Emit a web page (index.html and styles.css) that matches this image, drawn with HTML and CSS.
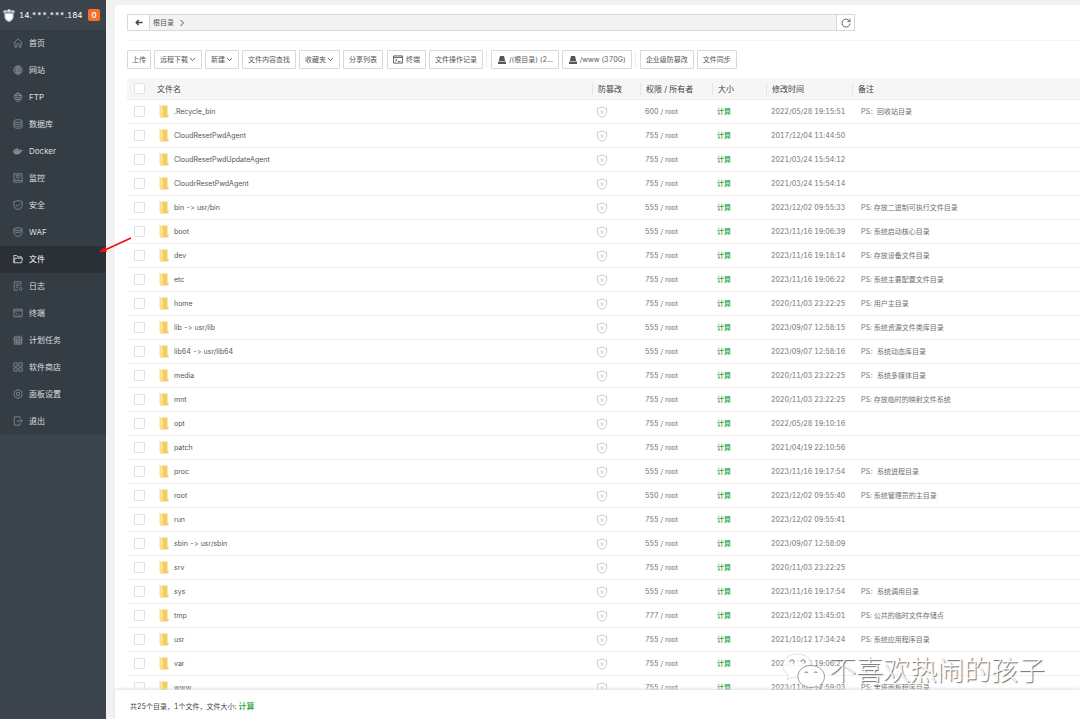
FILE: index.html
```html
<!DOCTYPE html>
<html lang="zh-CN">
<head>
<meta charset="utf-8">
<title>文件</title>
<link rel="stylesheet" href="styles.css">
</head>
<body>
<svg class="sprite" aria-hidden="true">
  <symbol id="shield" viewBox="0 0 12 13"><path d="M6 .8C4.600 1.900 3 2.300 1 2.400V6.500C1 9.300 3 11.200 6 12.300C9 11.200 11 9.300 11 6.500V2.400C9 2.300 7.400 1.900 6 .8Z"/><path d="M4.200 4.800L7.800 8.400M7.800 4.800L4.200 8.400"/></symbol>
  <symbol id="folder" viewBox="0 0 10 14"><path d="M1.500 .5H8.500V9.500H9.500V12.500H1.500Z" fill="#f3cd63"/><path d="M.5 .5L4 1.800V13.500L.5 12.300Z" fill="#fce08d"/></symbol>
  <symbol id="chevron" viewBox="0 0 8 6"><path d="M1 1L4 4.500L7 1"/></symbol>
  <symbol id="disk" viewBox="0 0 8 8"><path d="M2 0H6L7.200 5H.8Z"/><path d="M0 5.600H8V8H0Z"/></symbol>
  <symbol id="term" viewBox="0 0 12 10"><path d="M.7 .7H11.300V9.300H.7ZM.7 2.500H11.300M3 4.200L4.800 5.700L3 7.200M6 7.500H9"/></symbol>
</svg>
<div class="app">
  <aside class="side">
    <header class="brand">
      <svg class="logo" viewBox="0 0 12 13"><path d="M6 0L8 1.200L11.500 1.600V4L10.500 4.500V8.500C10 10.500 8 12 6 13C4 12 2 10.500 1.500 8.500V4.500L.5 4V1.600L4 1.200Z" fill="#d9dcdf"/><path d="M3 5H9V9L6 11.500L3 9Z" fill="#fff"/><path d="M1 3.800H11M4 1.500V3.500M8 1.500V3.500" stroke="#59616a" stroke-width=".7"/></svg>
      <span class="host">14.***.***.184</span>
      <span class="count">0</span>
    </header>
    <nav class="menu">
      <a href="#"><svg viewBox="0 0 12 12"><path d="M.8 6L6 1L11.200 6M2.300 5V11H4.500V8A1.500 1.500 0 0 1 7.500 8V11H9.700V5"/></svg>首页</a>
      <a href="#"><svg viewBox="0 0 12 12"><circle cx="6" cy="6" r="5"/><ellipse cx="6" cy="6" rx="2.300" ry="5"/><path d="M1 6H11M1.800 3.500H10.200M1.800 8.500H10.200M6 1V11"/></svg>网站</a>
      <a href="#"><svg viewBox="0 0 12 12"><path d="M1.500 7A4.600 4.600 0 1 1 10.500 7M1.500 4H10.500M1 7H11M4 7C3.300 4 4.500 1.500 6 .8C7.500 1.500 8.700 4 8 7M1.500 9H10.500M3.500 11H8.500"/></svg>FTP</a>
      <a href="#"><svg viewBox="0 0 12 12"><ellipse cx="6" cy="2.500" rx="4.800" ry="1.700"/><path d="M1.200 2.500V9.500C1.200 11.700 10.800 11.700 10.800 9.500V2.500M1.200 5C1.200 7 10.800 7 10.800 5M1.200 7.300C1.200 9.300 10.800 9.300 10.800 7.300"/></svg>数据库</a>
      <a href="#"><svg viewBox="0 0 12 12"><path class="solid" d="M0 5.500H8.500C8.300 4.500 8.600 3.800 9.200 3.300L10 4.700L12 5C11.600 6 10.800 6.300 10 6.300C9 9 7 10.200 4.500 10.200C1.500 10.200 0 8.500 0 5.500ZM1.500 3.500H7V5H1.500ZM4.500 2H6V3.200H4.500Z"/></svg>Docker</a>
      <a href="#"><svg viewBox="0 0 12 12"><path d="M1 1H11V11H1ZM1 8.800H11M3 6.500L5 4L6.500 6.500L9 3.500M3 2.700H9"/></svg>监控</a>
      <a href="#"><svg viewBox="0 0 12 12"><path d="M6 .6L11 2V6C11 8.700 9 10.500 6 11.500C3 10.500 1 8.700 1 6V2ZM3.500 5.800L5.400 7.600L8.600 4.300"/></svg>安全</a>
      <a href="#"><svg viewBox="0 0 12 12"><path d="M6 .8L11 2V6C11 8.700 9 10.500 6 11.500C3 10.500 1 8.700 1 6V2ZM1 4H11M3 5.700L4 7.300L5 5.700L6 7.300L7 5.700M8.300 7.300V5.700H9.500"/></svg>WAF</a>
      <a href="#" class="on" aria-current="page"><svg viewBox="0 0 12 12"><path d="M1 10.500V1.800H4.500L5.700 3.300H10V5M1 10.500L2.500 5H11.500L10.200 10.500Z"/></svg>文件</a>
      <a href="#"><svg viewBox="0 0 12 12"><path d="M6 11H1.500V1H9.500V6M3.500 3.500H7.500M3.500 5.700H7.500M3.500 8H5.500"/><circle cx="9.300" cy="9.300" r="1.600"/></svg>日志</a>
      <a href="#"><svg viewBox="0 0 12 12"><path d="M1 1.500H11V10.500H1ZM1 3.500H11M3 5.300L4.700 6.800L3 8.300M6 8.500H8.500"/></svg>终端</a>
      <a href="#"><svg viewBox="0 0 12 12"><path d="M1.500 2.500H10.500V11H1.500ZM.5 4.700H11.500M3.500 .8V3M8.500 .8V3M6 .8V3M1.500 6.800H10.500M1.500 8.900H10.500M4.500 5V11M7.500 5V11"/></svg>计划任务</a>
      <a href="#"><svg viewBox="0 0 12 12"><path d="M1 1H5V5H1ZM7 1H11V5H7ZM1 7H5V11H1ZM7 7H11V11H7Z"/></svg>软件商店</a>
      <a href="#"><svg viewBox="0 0 12 12"><path d="M4.800 .8H7.200L7.700 2.200L9.300 1.800L10.700 3.600L10 5L11.200 6L10 7.200L10.600 8.600L9.200 10.200L7.700 9.800L7.200 11.200H4.800L4.300 9.800L2.800 10.200L1.400 8.600L2 7.200L.8 6L2 5L1.300 3.600L2.700 1.800L4.300 2.200Z"/><circle cx="6" cy="6" r="2"/></svg>面板设置</a>
      <a href="#"><svg viewBox="0 0 12 12"><path d="M8.500 3.500V1H1.500V11H8.500V8.500M4.500 6H11M9.200 4L11.200 6L9.200 8"/></svg>退出</a>
    </nav>
  </aside>
  <main class="panel">
    <div class="path">
      <button class="back" aria-label="后退"><svg viewBox="0 0 10 8"><path d="M9.500 4H2M4.500 1L1.500 4L4.500 7" fill="none" stroke="#444" stroke-width="1.800"/></svg></button>
      <div class="crumbs"><a href="#">根目录</a><svg viewBox="0 0 6 8"><path d="M1.500 1L4.500 4L1.500 7"/></svg></div>
      <button class="reload" aria-label="刷新"><svg viewBox="0 0 12 12"><path d="M10.300 4A4.800 4.800 0 1 0 10.800 6.500M10.800 1V4.300H7.500"/></svg></button>
    </div>
    <div class="tools">
      <button>上传</button>
      <button>远程下载<svg class="chev"><use href="#chevron"/></svg></button>
      <button>新建<svg class="chev"><use href="#chevron"/></svg></button>
      <button>文件内容查找</button>
      <button>收藏夹<svg class="chev"><use href="#chevron"/></svg></button>
      <button>分享列表</button>
      <button class="terminal"><svg class="term"><use href="#term"/></svg>终端</button>
      <button>文件操作记录</button>
      <span class="rule"></span>
      <button class="disk"><svg><use href="#disk"/></svg>/(根目录) (2...</button>
      <button class="disk"><svg><use href="#disk"/></svg>/www (370G)</button>
      <span class="rule"></span>
      <button>企业级防篡改</button>
      <button>文件同步</button>
    </div>
    <div class="list">
      <table>
        <colgroup><col class="c-check"><col><col class="c-guard"><col class="c-perm"><col class="c-size"><col class="c-time"><col class="c-note"></colgroup>
        <thead><tr><th><input type="checkbox" aria-label="全选"></th><th>文件名</th><th>防篡改</th><th>权限 / 所有者</th><th>大小</th><th>修改时间</th><th>备注</th></tr></thead>
        <tbody id="rows"></tbody>
      </table>
    </div>
    <footer class="total">共25个目录，1个文件，文件大小: <a href="#">计算</a></footer>
  </main>
</div>
<svg class="arrow" viewBox="0 0 34 18" aria-hidden="true"><path d="M32 1L6 13" stroke="#f00d0d" stroke-width="1.600"/><path d="M0 15L5.500 9.500L8 15Z" fill="#f00d0d"/></svg>
<div class="mark">
  <svg viewBox="0 0 44 36" aria-hidden="true">
    <path class="back-bubble" d="M15 1C7 1 1 6 1 12.500C1 16.500 3 19.500 6.500 22L5 27L10.500 24C12 24.400 14 24.600 16 24.500C16 17 22 12 30 12C29 5.500 23 1 15 1Z"/>
    <path class="front-bubble" d="M29 12.500C21.500 12.500 16 17.500 16 23.500C16 30 21.500 34.500 29 34.500C31 34.500 33 34.200 34.500 33.500L39 36L38 32C41 30 42.500 27 42.500 23.500C42.500 17.500 36.500 12.500 29 12.500Z"/>
    <g class="eyes"><path d="M8 9A2 2 0 1 1 11 10.500M19 9A2 2 0 1 1 22 10.500M22.500 20A2 2 0 0 1 26 20M32 20A2 2 0 0 1 35.500 20"/></g>
  </svg>
  <span>不喜欢热闹的孩子</span>
</div>
<script src="app.js"></script>
</body>
</html>
```
FILE: styles.css
```css
* { box-sizing: border-box; }
body { margin: 0; font: 7px/10px Inter, "Noto Sans CJK SC", sans-serif; font-variant-ligatures: none; font-feature-settings: "calt" 0; font-variant-numeric: tabular-nums; color: #555; background: #f2f2f2; }
a { color: inherit; text-decoration: none; }
svg { fill: none; flex: none; }
button { font: inherit; color: inherit; background: #fff; border: 1px solid #d9d9d9; padding: 0; }
.sprite { position: absolute; width: 0; height: 0; }

.app { display: flex; height: 100vh; }
.side { width: 106px; flex: none; background: #3c444d; color: #dcdee0; font-size: 8px; }
.brand { display: flex; align-items: center; height: 30px; padding: 0 6px 0 3px; color: #fff; }
.logo { width: 12px; height: 13px; margin-right: 4px; }
.count { margin-left: auto; width: 12px; height: 12px; border-radius: 2px; background: #fc6d26; text-align: center; line-height: 12px; font-weight: 600; }
.menu { background: #353d44; }
.menu a { display: flex; align-items: center; gap: 6px; height: 27px; padding: 0 0 1px 13px; }
.menu svg { width: 10px; height: 10px; stroke: #858c91; stroke-width: 1; }
.menu .solid { fill: #858c91; stroke: none; }
.menu .on { background: #2b2f36; color: #fff; }
.menu .on svg { stroke: #e4e5e6; }

.panel { flex: 1; min-width: 0; display: flex; flex-direction: column; margin: 5px 0 0 9px; background: #fff; border-radius: 2px 0 0 0; }
.path { display: flex; height: 36px; margin-left: 12px; padding: 9px 225px 9px 0; border-bottom: 1px solid #f3f3f3; }
.path button { display: flex; align-items: center; justify-content: center; }
.back { width: 23px; }
.back svg { width: 8px; height: 7px; }
.crumbs { flex: 1; display: flex; align-items: center; gap: 5px; padding-left: 3px; background: #f3f3f3; border: solid #d9d9d9; border-width: 1px 0; }
.crumbs svg { width: 6px; height: 8px; stroke: #555; }
.reload { width: 19px; }
.reload svg { width: 10px; height: 10px; stroke: #666; stroke-width: 1.2; }

.tools { display: flex; align-items: center; gap: 3px; margin-left: 12px; padding: 9px 0; }
.tools button { display: flex; align-items: center; height: 19px; padding: 0 5px; border-radius: 1px; white-space: nowrap; }
.tools button:first-child { padding: 0 4px; }
.chev { width: 7px; height: 5px; margin-left: 1px; stroke: #555; }
.tools .terminal { margin-left: 1px; }
.term { width: 10px; height: 9px; margin-right: 3px; stroke: #444; }
.disk svg { width: 8px; height: 8px; margin: 0 3px 0 1px; fill: #555; }
.rule { width: 1px; height: 17px; margin-right: 1px; background: #eee; }

.list { flex: 1; min-height: 0; overflow: hidden; margin-left: 12px; }
table { width: 100%; table-layout: fixed; border-collapse: separate; border-spacing: 0; }
.c-check { width: 25px; }
.c-guard { width: 48px; }
.c-perm { width: 72px; }
.c-size { width: 54px; }
.c-time { width: 86px; }
.c-note { width: 228px; }
th { height: 22px; padding: 0 6px; text-align: left; font-size: 8px; font-weight: 400; color: #444; background: linear-gradient(#e6e6e6, #e6e6e6) left center / 1px 12px no-repeat #f6f6f6; border-bottom: 1px solid #ececec; }
th:nth-child(-n+2) { padding: 0 5px; background-image: none; }
td { height: 24px; padding: 0 5px; border-bottom: 1px solid #f0f0f0; color: #707070; white-space: nowrap; }
th:first-child, td:first-child { padding: 0 7px; }
td:nth-child(2), td:nth-child(3) { padding: 0 4px; }
td:nth-child(5) { color: #20a53a; font-weight: 500; }
td:nth-child(7) { padding-left: 9px; }
.name { display: flex; align-items: center; gap: 5px; padding-left: 3px; color: #555; }
.name svg { width: 10px; height: 14px; }
.guard { display: block; width: 12px; height: 12px; stroke: #c8c8c8; }
input { appearance: none; display: block; width: 11px; height: 11px; margin: 0; border: 1px solid #e2e2e2; border-radius: 1px; background: #fff; }

.total { position: relative; height: 29px; padding: 11px 15px 0; color: #444; box-shadow: 0 -1px 3px #ddd; }
.total a { color: #20a53a; font-size: 8px; font-weight: 500; }

.arrow { position: absolute; left: 99px; top: 237px; width: 34px; height: 18px; }
.mark { position: absolute; right: 35px; bottom: 30px; display: flex; align-items: center; gap: 3px; color: #fff; font-size: 27px; font-weight: 300; line-height: 36px; text-shadow: 1px 1px 1px #666; }
.mark svg { width: 44px; height: 36px; }
.back-bubble { fill: #fff; fill-opacity: .85; stroke: #ccc; stroke-width: .6; }
.front-bubble { fill: #fff; fill-opacity: .85; stroke: #888; stroke-width: .8; }
.eyes { stroke: #777; }
```
FILE: app.js
```js
const files = [
  ['.Recycle_bin', 600, '2022/05/28 19:15:51', 'PS：回收站目录'],
  ['CloudResetPwdAgent', 755, '2017/12/04 11:44:50', ''],
  ['CloudResetPwdUpdateAgent', 755, '2021/03/24 15:54:12', ''],
  ['CloudrResetPwdAgent', 755, '2021/03/24 15:54:14', ''],
  ['bin -> usr/bin', 555, '2023/12/02 09:55:33', 'PS: 存放二进制可执行文件目录'],
  ['boot', 555, '2023/11/16 19:06:39', 'PS: 系统启动核心目录'],
  ['dev', 755, '2023/11/16 19:18:14', 'PS: 存放设备文件目录'],
  ['etc', 755, '2023/11/16 19:06:22', 'PS: 系统主要配置文件目录'],
  ['home', 755, '2020/11/03 23:22:25', 'PS: 用户主目录'],
  ['lib -> usr/lib', 555, '2023/09/07 12:58:15', 'PS: 系统资源文件类库目录'],
  ['lib64 -> usr/lib64', 555, '2023/09/07 12:58:16', 'PS：系统动态库目录'],
  ['media', 755, '2020/11/03 23:22:25', 'PS：系统多媒体目录'],
  ['mnt', 755, '2020/11/03 23:22:25', 'PS: 存放临时的映射文件系统'],
  ['opt', 755, '2022/05/28 19:10:16', ''],
  ['patch', 755, '2021/04/19 22:10:56', ''],
  ['proc', 555, '2023/11/16 19:17:54', 'PS：系统进程目录'],
  ['root', 550, '2023/12/02 09:55:40', 'PS: 系统管理员的主目录'],
  ['run', 755, '2023/12/02 09:55:41', ''],
  ['sbin -> usr/sbin', 555, '2023/09/07 12:58:09', ''],
  ['srv', 755, '2020/11/03 23:22:25', ''],
  ['sys', 555, '2023/11/16 19:17:54', 'PS：系统调用目录'],
  ['tmp', 777, '2023/12/02 13:45:01', 'PS: 公共的临时文件存储点'],
  ['usr', 755, '2021/10/12 17:34:24', 'PS: 系统应用程序目录'],
  ['var', 755, '2023/11/16 19:06:22', ''],
  ['www', 755, '2023/11/03 17:59:03', 'PS: 宝塔面板程序目录']
];
document.getElementById('rows').innerHTML = files.map(([name, mode, time, note]) => `<tr>
  <td><input type="checkbox" aria-label="${name.replace('>', '&gt;')}"></td>
  <td><a class="name" href="#"><svg><use href="#folder"/></svg>${name.replace('>', '&gt;')}</a></td>
  <td><svg class="guard"><use href="#shield"/></svg></td>
  <td>${mode} / root</td><td><a href="#">计算</a></td><td>${time}</td><td>${note}</td></tr>`).join('');
```
